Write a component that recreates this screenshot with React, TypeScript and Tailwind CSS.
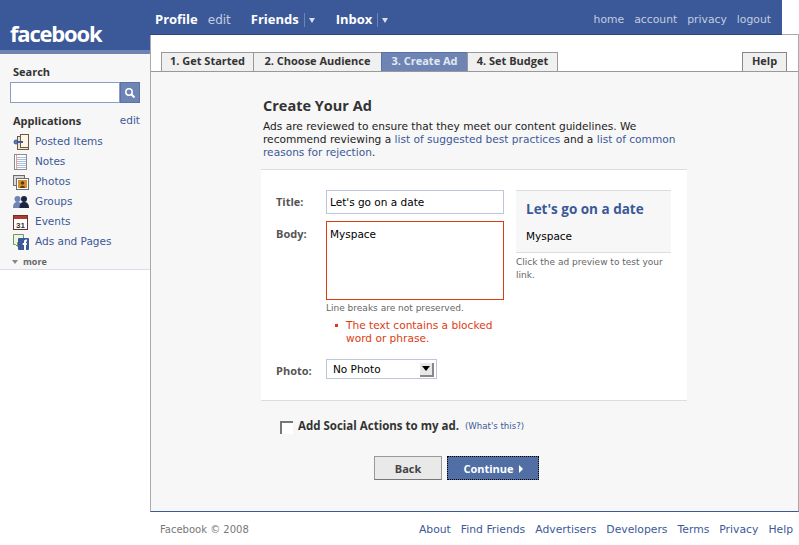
const font = "font-['DejaVu_Sans',sans-serif]";
const bold = "font-['Open_Sans',sans-serif] font-bold";

function PostedIcon() {
  return (
    <svg width="16" height="16" viewBox="0 0 16 16">
      <rect x="4.5" y="2.5" width="11" height="13" fill="#f3e3c8" stroke="#6b5a45" />
      <rect x="7.5" y="0.5" width="8" height="13" fill="#fdf6e6" stroke="#6b5a45" />
      <circle cx="3" cy="8" r="2" fill="#5f78ab" stroke="#3b5998" />
      <rect x="4" y="7" width="6" height="2" fill="#3b5998" />
    </svg>
  );
}

function NotesIcon() {
  return (
    <svg width="13" height="16" viewBox="0 0 13 16">
      <rect x="0.5" y="0.5" width="12" height="15" fill="#fff" stroke="#8c8c8c" />
      <path d="M2 3.5h10M2 5.5h10M2 7.5h10M2 9.5h10M2 11.5h10M2 13.5h10" stroke="#a9bde0" />
      <path d="M2.5 1v14" stroke="#e8a08c" />
    </svg>
  );
}

function PhotosIcon() {
  return (
    <svg width="16" height="15" viewBox="0 0 16 15">
      <rect x="0.5" y="0.5" width="11" height="10" fill="#d9d9d9" stroke="#6d6d6d" />
      <rect x="3.5" y="3.5" width="12" height="11" fill="#fff" stroke="#6d6d6d" />
      <rect x="5" y="5" width="9" height="8" fill="#d98f2b" />
      <circle cx="9.5" cy="8" r="1.8" fill="#5a3c1c" />
      <path d="M7 13c0-3 5-3 5 0z" fill="#5a3c1c" />
    </svg>
  );
}

function GroupsIcon() {
  return (
    <svg width="16" height="14" viewBox="0 0 16 14">
      <circle cx="4.5" cy="4" r="3" fill="#6d84b4" />
      <path d="M0 13c0-5 2-6 4.5-6S9 8 9 13z" fill="#6d84b4" />
      <circle cx="11" cy="4" r="3" fill="#1c2540" />
      <path d="M6.5 13c0-5 2-6 4.5-6s5 1 5 6z" fill="#1c2540" />
    </svg>
  );
}

function EventsIcon() {
  return (
    <svg width="15" height="15" viewBox="0 0 15 15">
      <rect x="0.5" y="0.5" width="14" height="14" fill="#fff" stroke="#6e2f2a" />
      <rect x="1" y="1" width="13" height="3" fill="#b03a30" />
      <text x="7.5" y="12.5" textAnchor="middle" fontSize="8" fontFamily="Liberation Sans" fontWeight="bold" fill="#333">31</text>
    </svg>
  );
}

function AdsIcon() {
  return (
    <svg width="16" height="16" viewBox="0 0 16 16">
      <path d="M0.5 0.5h10v8h-6v4l-2-2h-2z" fill="#eef4e4" stroke="#6c9a5c" />
      <rect x="5" y="4" width="11" height="12" rx="1" fill="#3b5998" />
      <path d="M11 16v-5h-1.300v-2h1.300v-1.500c0-1.500 1-2 3-2v2c-1 0-1 0-1 1.500h1l-.3 2h-.7v5z" fill="#fff" />
    </svg>
  );
}

const apps = [
  { name: "Posted Items", icon: <PostedIcon /> },
  { name: "Notes", icon: <NotesIcon /> },
  { name: "Photos", icon: <PhotosIcon /> },
  { name: "Groups", icon: <GroupsIcon /> },
  { name: "Events", icon: <EventsIcon /> },
  { name: "Ads and Pages", icon: <AdsIcon /> },
];

const tabs = ["1. Get Started", "2. Choose Audience", "3. Create Ad", "4. Set Budget"];
const tabWidths = ["w-[93px]", "w-[129px]", "w-[87px]", "w-[91px]"];

function Sidebar() {
  return (
    <div className="w-[150px] shrink-0">
      <div className="h-[50px] bg-[#3b5998] pl-[10px] pt-[19px]">
        <div className="font-['Open_Sans',sans-serif] text-[22px] font-bold leading-[28px] tracking-[-1.200px] text-white">
          facebook
        </div>
      </div>
      <div className="h-[220px] border-t-4 border-b border-t-[#6d84b4] border-b-[#d8dfea] bg-[#f7f7f7]">
        <div className={`pl-[13px] pt-[11px] text-[11px] leading-[13px] text-[#333] ${bold}`}>Search</div>
        <div className="mt-[4px] ml-[10px] flex h-[21px] w-[130px]">
          <div className="w-[110px] border border-[#8a9dc4] bg-white" />
          <div className="flex w-[20px] items-center justify-center border border-[#5a72a6] bg-[#6d84b4]">
            <svg width="12" height="12" viewBox="0 0 12 12" fill="none">
              <circle cx="5" cy="5" r="3.200" stroke="#fff" strokeWidth="1.500" />
              <path d="M7.500 7.500l3 3" stroke="#fff" strokeWidth="2" />
            </svg>
          </div>
        </div>
        <div className="mt-[11px] flex items-center justify-between pl-[13px] pr-[10px] leading-[13px]">
          <span className={`text-[11px] text-[#333] ${bold}`}>Applications</span>
          <span className="text-[10.500px] text-[#3b5998]">edit</span>
        </div>
        <div className="mt-[5px] flex flex-col">
          {apps.map((app) => (
            <div key={app.name} className="flex h-[20px] items-center">
              <div className="flex w-[35px] shrink-0 items-center justify-center pl-[8px] pr-[2px]">{app.icon}</div>
              <span className="text-[10.500px] text-[#3b5998]">{app.name}</span>
            </div>
          ))}
        </div>
        <div className={`mt-[4px] flex items-center gap-[5px] pl-[12px] text-[9px] leading-[12px] text-[#666] ${bold}`}>
          <span className="h-0 w-0 border-x-[3px] border-t-[4px] border-x-transparent border-t-[#888]" />
          more
        </div>
      </div>
    </div>
  );
}

function TopBar() {
  return (
    <div className="relative z-10 -mb-px flex h-[35px] w-[632px] items-center justify-between border-b border-[#2f477a] bg-[#3b5998] pl-[5px] pr-[11px] pt-[6px]">
      <div className={`flex items-center text-[13px] text-white ${bold}`}>
        <span>Profile</span>
        <span className="ml-[10px] font-['DejaVu_Sans',sans-serif] text-[12px] font-normal text-[#c3cde0]">edit</span>
        <span className="ml-[20px]">Friends</span>
        <span className="ml-[5px] flex h-[14px] items-center border-l border-[#6d84b4] pl-[4px]">
          <span className="h-0 w-0 border-x-[3px] border-t-[5px] border-x-transparent border-t-[#d8dfea]" />
        </span>
        <span className="ml-[21px]">Inbox</span>
        <span className="ml-[5px] flex h-[14px] items-center border-l border-[#6d84b4] pl-[4px]">
          <span className="h-0 w-0 border-x-[3px] border-t-[5px] border-x-transparent border-t-[#d8dfea]" />
        </span>
      </div>
      <div className="flex gap-[10px] text-[10.800px] text-[#c3cde0]">
        <span>home</span>
        <span>account</span>
        <span>privacy</span>
        <span>logout</span>
      </div>
    </div>
  );
}

function Tabs() {
  return (
    <div className="flex h-[37px] items-end justify-between border-b border-[#999] bg-white pl-[10px] pr-[11px]">
      <div className="flex">
        {tabs.map((tab, i) => (
          <div
            key={tab}
            className={
              i === 2
                ? `flex h-[19px] ${tabWidths[i]} -ml-px items-center justify-center border border-b-0 border-[#5a72a6] bg-[#6d84b4] pb-px text-[11px] text-[#e4e9f3] ${bold}`
                : `flex h-[19px] ${tabWidths[i]} ${i > 0 ? "-ml-px" : ""} items-center justify-center border border-b-0 border-[#999] bg-[#f0f0f0] pb-px text-[11px] text-[#333] ${bold}`
            }
          >
            {tab}
          </div>
        ))}
      </div>
      <div className={`flex h-[19px] w-[45px] items-center justify-center border border-b-0 border-[#888] bg-[#f0f0f0] pb-px text-[11px] text-[#333] ${bold}`}>
        Help
      </div>
    </div>
  );
}

function AdForm() {
  return (
    <div className="mt-[10px] ml-[110px] flex h-[232px] w-[426px] border-y border-[#ddd] bg-white pt-[20px]">
      <div className="w-[255px] shrink-0">
        <div className="flex h-[24px] items-center">
          <span className={`w-[65px] pl-[15px] pt-px text-[11px] text-[#555] ${bold}`}>Title:</span>
          <div className="flex h-[24px] w-[178px] items-center border border-[#bdc7d8] pl-[3px] pt-[2px] text-[10.500px] text-black">
            Let's go on a date
          </div>
        </div>
        <div className="mt-[7px] flex">
          <span className={`w-[65px] pl-[15px] pt-[5px] text-[11px] text-[#555] ${bold}`}>Body:</span>
          <div className="h-[79px] w-[178px] border border-[#dd3c10] pl-[3px] pt-[4px] text-[10.500px] leading-[17px] text-black">
            Myspace
          </div>
        </div>
        <div className="ml-[65px] mt-[2px] text-[9px] leading-[13px] text-[#666]">Line breaks are not preserved.</div>
        <div className="ml-[74px] mt-[4px] flex text-[10.600px] leading-[13px] text-[#dd3c10]">
          <span className="mt-[5px] mr-[8px] h-[3px] w-[3px] shrink-0 bg-[#dd3c10]" />
          <span className="w-[160px]">The text contains a blocked word or phrase.</span>
        </div>
        <div className="mt-[14px] flex h-[20px] items-center">
          <span className={`w-[65px] pl-[15px] pt-[4px] text-[11px] text-[#555] ${bold}`}>Photo:</span>
          <div className="flex h-[20px] w-[111px] items-center justify-between border border-[#bdc7d8] pl-[6px] pr-[2px] pt-px text-[10.500px] text-black">
            No Photo
            <span className="flex h-[14px] w-[14px] items-center justify-center border-r-2 border-b-2 border-[#888] bg-[#e8e8e8]">
              <span className="h-0 w-0 border-x-[4px] border-t-[5px] border-x-transparent border-t-black" />
            </span>
          </div>
        </div>
      </div>
      <div className="w-[155px]">
        <div className="h-[63px] border-y border-[#ddd] bg-[#f7f7f7] pl-[10px] pt-[9px]">
          <div className={`text-[13.500px] leading-[18px] text-[#3b5998] ${bold}`}>Let's go on a date</div>
          <div className="mt-[12px] text-[10.500px] leading-[13px] text-black">Myspace</div>
        </div>
        <div className="mt-[3px] text-[9px] leading-[13px] text-[#666]">Click the ad preview to test your link.</div>
      </div>
    </div>
  );
}

function MainPanel() {
  return (
    <div className="h-[478px] w-[649px] border border-x-[#aaa] border-t-[#aaa] border-b-[#3b5998]">
      <Tabs />
      <div className="h-[439px] bg-[#f7f7f7]">
        <div className="pl-[112px] pt-[25px]">
          <h1 className={`text-[14.500px] leading-[18px] text-[#333] ${bold}`}>Create Your Ad</h1>
          <p className="mt-[5px] w-[425px] text-[10.600px] leading-[13px] text-[#222]">
            Ads are reviewed to ensure that they meet our content guidelines. We recommend reviewing a{" "}
            <span className="text-[#3b5998]">list of suggested best practices</span> and a{" "}
            <span className="text-[#3b5998]">list of common reasons for rejection</span>.
          </p>
        </div>
        <AdForm />
        <div className="mt-[20px] ml-[129px] flex items-center">
          <span className="h-[13px] w-[13px] border-t-2 border-l-2 border-[#777] bg-white" />
          <span className={`ml-[5px] -mt-[4px] text-[11.500px] text-[#333] ${bold}`}>Add Social Actions to my ad.</span>
          <span className="ml-[6px] -mt-[3px] text-[8.600px] text-[#3b5998]">(What's this?)</span>
        </div>
        <div className="mt-[22px] ml-[223px] flex gap-[5px]">
          <div className={`flex h-[24px] w-[68px] items-center justify-center border border-[#999] border-b-[#777] bg-[#e9e9e9] pt-px text-[11px] text-[#444] ${bold}`}>
            Back
          </div>
          <div className={`flex h-[24px] w-[92px] items-center justify-center gap-[5px] border border-dotted border-black bg-[#516ea5] pt-px text-[11px] text-white ${bold}`}>
            Continue
            <span className="h-0 w-0 border-y-[4px] border-l-[4px] border-y-transparent border-l-white" />
          </div>
        </div>
      </div>
    </div>
  );
}

function Footer() {
  return (
    <div className="mt-[11px] flex w-[649px] items-center justify-between pl-[10px] pr-[6px] leading-[13px]">
      <span className="text-[10px] text-[#777]">Facebook © 2008</span>
      <div className="flex gap-[10px] text-[10.800px] text-[#3b5998]">
        <span>About</span>
        <span>Find Friends</span>
        <span>Advertisers</span>
        <span>Developers</span>
        <span>Terms</span>
        <span>Privacy</span>
        <span>Help</span>
      </div>
    </div>
  );
}

export default function App() {
  return (
    <div className={`flex h-[545px] w-[799px] overflow-hidden bg-white ${font}`}>
      <Sidebar />
      <div className="flex-1">
        <TopBar />
        <MainPanel />
        <Footer />
      </div>
    </div>
  );
}
